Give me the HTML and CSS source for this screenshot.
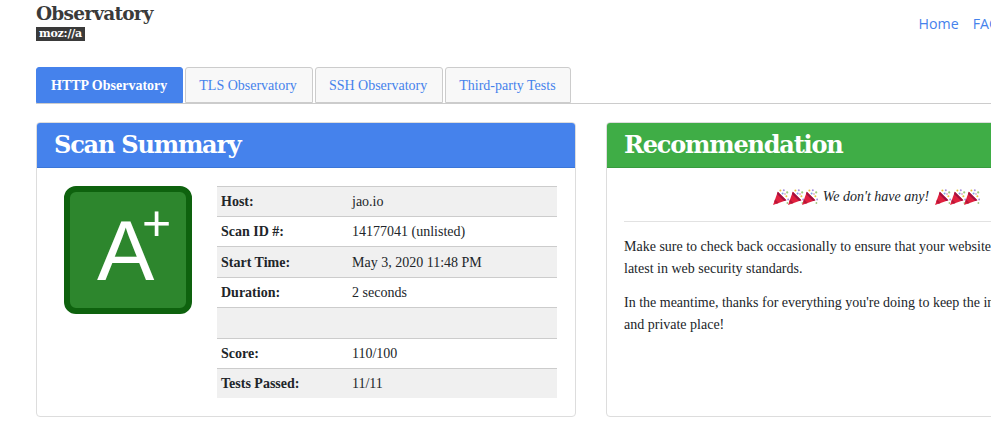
FILE: index.html
```html
<!DOCTYPE html>
<html lang="en">
<head>
<meta charset="utf-8">
<title>Observatory</title>
<link rel="stylesheet" href="styles.css">
</head>
<body>
<svg class="defs" width="0" height="0" aria-hidden="true">
  <symbol id="popper" viewBox="0 0 16 16">
    <path d="M0 16 L4.8 2.8 L13.4 11.2 Z" fill="#e0203e"/>
    <path d="M4.8 2.8 L13.4 11.2 L11.2 12 L4 5 Z" fill="#a01240"/>
    <path d="M2 10.6 L5.6 14.1 L3.6 14.8 L1.3 12.5 Z" fill="#b51538"/>
    <circle cx="7.4" cy="1.6" r="1" fill="#e6c640"/><circle cx="10.8" cy="1.2" r="1" fill="#a992e0"/>
    <circle cx="14.2" cy="3.4" r="1.1" fill="#9fcc7f"/><circle cx="9.6" cy="4.4" r="1" fill="#7fa9e6"/>
    <circle cx="13.4" cy="7.2" r="1" fill="#e6c640"/><circle cx="15.2" cy="10.4" r="1" fill="#a992e0"/>
    <circle cx="12" cy="5" r=".8" fill="#d578a8"/><circle cx="14.4" cy="14" r=".9" fill="#9fcc7f"/>
  </symbol>
</svg>
<div class="container">
  <header class="topbar">
    <div class="brand">
      <div class="brand-name">Observatory</div>
      <div class="moz">moz://a</div>
    </div>
    <nav class="links"><a href="#">Home</a><a href="#">FAQ</a></nav>
  </header>
  <ul class="tabs">
    <li class="tab active">HTTP Observatory</li>
    <li class="tab">TLS Observatory</li>
    <li class="tab">SSH Observatory</li>
    <li class="tab">Third-party Tests</li>
  </ul>
  <div class="cards">
    <section class="card">
      <h2 class="card-head blue">Scan Summary</h2>
      <div class="summary">
        <div class="grade-col">
          <div class="grade"><span class="letter">A</span><span class="plus">+</span></div>
        </div>
        <table class="facts">
          <tr><th>Host:</th><td>jao.io</td></tr>
          <tr><th>Scan ID #:</th><td>14177041 (unlisted)</td></tr>
          <tr><th>Start Time:</th><td>May 3, 2020 11:48 PM</td></tr>
          <tr><th>Duration:</th><td>2 seconds</td></tr>
          <tr><th>&nbsp;</th><td></td></tr>
          <tr><th>Score:</th><td>110/100</td></tr>
          <tr class="last"><th>Tests Passed:</th><td>11/11</td></tr>
        </table>
      </div>
    </section>
    <section class="card">
      <h2 class="card-head green">Recommendation</h2>
      <div class="rec">
        <div class="none">
          <span class="poppers"><svg><use href="#popper"/></svg><svg><use href="#popper"/></svg><svg><use href="#popper"/></svg></span>
          <em>We don't have any!</em>
          <span class="poppers"><svg><use href="#popper"/></svg><svg><use href="#popper"/></svg><svg><use href="#popper"/></svg></span>
        </div>
        <hr class="rule">
        <p>Make sure to check back occasionally to ensure that your website is up-to-date with the latest in web security standards.</p>
        <p>In the meantime, thanks for everything you're doing to keep the internet a safer<br>and private place!</p>
      </div>
    </section>
  </div>
</div>
</body>
</html>
```
FILE: styles.css
```css
html, body { margin: 0; padding: 0; overflow: hidden; height: 100%; background: #fff; }
body { font: 14px/21px "Liberation Serif", serif; color: #212529; }
.defs { display: block; height: 0; }
.container { width: 1110px; margin-left: 36px; }
.topbar { display: flex; justify-content: space-between; height: 67px; }
.brand-name { font: 700 18.5px/20px "DejaVu Serif", serif; color: #3a3a3a; padding-top: 4px; letter-spacing: -.75px; }
.moz { display: inline-block; margin-top: 3px; background: #3a3a3a; color: #fff; font: 700 11px/14px "DejaVu Serif", serif; padding: 0 3px; letter-spacing: -.2px; vertical-align: top; }
.links { display: flex; gap: 14px; padding: 13px 146px 0 0; font: 14.2px/21px "Open Sans", sans-serif; height: 21px; }
.links a { color: #4582ec; text-decoration: none; }
.tabs { display: flex; gap: 2px; list-style: none; margin: 0; padding: 0; height: 36px; border-bottom: 1px solid #ccc; width: 955px; }
.tab { height: 36px; box-sizing: border-box; padding: 7px 15px 7px 13px; border: 1px solid #ccc; border-radius: 3px 3px 0 0; background: #f8f8f8; color: #4582ec; }
.tab:last-child { padding-right: 14px; }
.tab.active { padding: 7px 15px 7px 14px; background: #4582ec; border-color: #4582ec; color: #fff; font-weight: 700; }
.cards { display: flex; gap: 30px; margin-top: 18px; }
.card { width: 540px; height: 295px; box-sizing: border-box; border: 1px solid #ddd; border-radius: 4px; flex: none; }
.card-head { margin: 0; height: 45px; box-sizing: border-box; padding: 0 17px; border-radius: 3px 3px 0 0; color: #fff; font: 700 24px/43px "DejaVu Serif", serif; letter-spacing: -1.2px; }
.blue { background: #4582ec; border-bottom: 1px solid #3b76d8; }
.green { background: #3fad46; border-bottom: 1px solid #379b3e; }
.summary { display: flex; padding: 17.6px 18px 0 27px; }
.grade-col { width: 153px; flex: none; }
.grade { position: relative; width: 128px; height: 128px; box-sizing: border-box; border: 6px solid #0e620e; border-radius: 12px; background: #2d862d; color: #fff; font-family: "Liberation Sans", sans-serif; }
.letter { position: absolute; left: 27px; top: 10px; font-size: 86px; line-height: 96px; }
.plus { position: absolute; left: 72px; top: 3px; font-size: 50px; line-height: 56px; }
.facts { border-collapse: collapse; width: 340px; table-layout: fixed; }
.facts tr { height: 30.4px; }
.facts tr.last { height: 30px; }
.facts tr:nth-child(odd) { background: #f0f0f0; }
.facts th, .facts td { padding: 4px; text-align: left; border-top: 1px solid #ccc; }
.facts th { width: 123px; font-weight: 700; }
.rec { padding: 18px 17px; }
.none { display: flex; justify-content: center; align-items: center; gap: 6px; height: 21px; }
.poppers { display: inline-flex; }
.poppers svg { width: 16px; height: 16px; margin-right: -1.5px; }
.rule { margin: 14px 0 14px; border: 0; border-top: 1px solid #e2e2e2; }
.rec p { margin: 0 0 12px; line-height: 22px; }
```
